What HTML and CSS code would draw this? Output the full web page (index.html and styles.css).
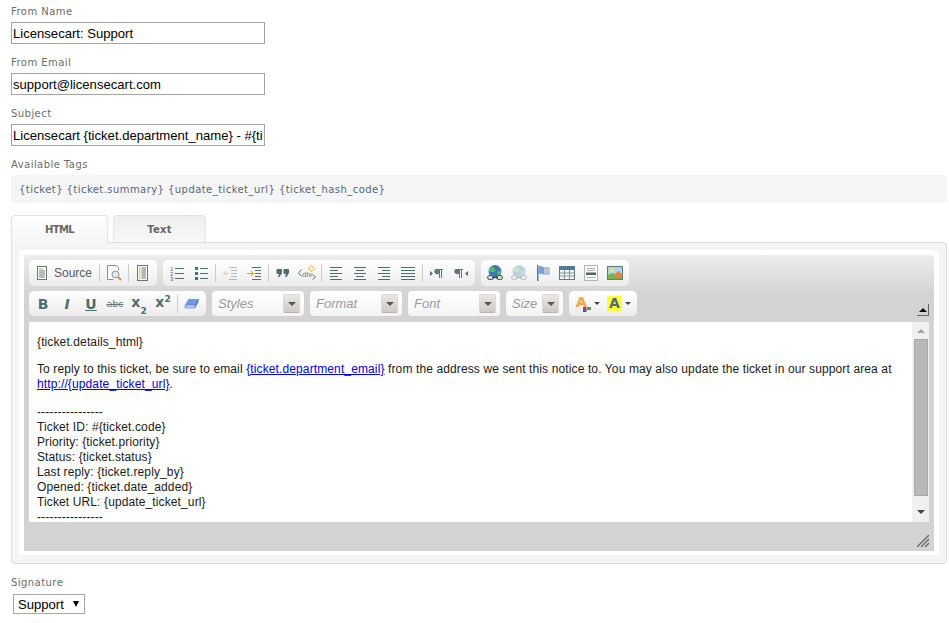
FILE: index.html
```html
<!DOCTYPE html>
<html lang="en">
<head>
<meta charset="utf-8">
<title>Ticket notice template</title>
<link rel="stylesheet" href="styles.css">
</head>
<body>
<svg class="defs" aria-hidden="true">
  <symbol id="i-doc" viewBox="0 0 16 16"><rect x="3.500" y="1.500" width="9" height="13" fill="#fff" stroke="#5f7a78"/><path d="M5 4h4" stroke="#e8a040"/><path d="M5 6h6M5 8h6M5 10h6M5 12h6" stroke="#5f7a78"/></symbol>
  <symbol id="i-preview" viewBox="0 0 16 16"><path d="M1.500 .5h9l2 2v3M1.500 .5v14h6" fill="#fff" stroke="#7f9290"/><circle cx="9.500" cy="9.500" r="3.500" fill="#dfe8f0" stroke="#8a96a0"/><path d="M12 12l3 3" stroke="#d89030" stroke-width="2"/></symbol>
  <symbol id="i-tpl" viewBox="0 0 16 16"><rect x="2.500" y=".5" width="10" height="15" fill="#fbfbf6" stroke="#5f7a78"/><path d="M4 3h1.500M4 5h1.500M4 7h1.500M4 9h1.500M4 11h1.500M4 13h1.500" stroke="#e8962c"/><path d="M6.500 3h4.500M6.500 5h4.500M6.500 7h4.500M6.500 9h4.500M6.500 11h4.500M6.500 13h4.500" stroke="#5f7a78"/></symbol>
  <symbol id="i-ul" viewBox="0 0 16 16"><path d="M2 2h3v3H2zM2 7h3v3H2zM2 12h3v3H2z" fill="#4f6d6b"/><path d="M7 3.500h8M7 8.500h8M7 13.500h8" stroke="#4f6d6b"/></symbol>
  <symbol id="i-out" viewBox="0 0 16 16"><g opacity=".4"><path d="M7 2.500h8M9 5.500h6M9 8.500h6M9 11.500h6M7 14.500h8" stroke="#4f6d6b"/><path d="M7 8.500H2M4.500 6l-2.500 2.500 2.500 2.500" fill="none" stroke="#e8962c"/></g></symbol>
  <symbol id="i-ind" viewBox="0 0 16 16"><path d="M6 2.500h9M9 5.500h6M9 8.500h6M9 11.500h6M6 14.500h9" stroke="#4f6d6b"/><path d="M1 8.500h6M5 6l2.500 2.500L5 11" fill="none" stroke="#e8962c"/></symbol>
  <symbol id="i-quote" viewBox="0 0 16 16"><path d="M2.500 4h3.500a1 1 0 0 1 1 1v3l-2.500 4H3l1-3H2.500a1 1 0 0 1-1-1V5a1 1 0 0 1 1-1zM9.500 4H13a1 1 0 0 1 1 1v3l-2.500 4H10l1-3H9.500a1 1 0 0 1-1-1V5a1 1 0 0 1 1-1z" fill="#4f6d6b"/></symbol>
  <symbol id="i-left" viewBox="0 0 16 16"><path d="M2 2.500h12M2 5.500h8M2 8.500h12M2 11.500h8M2 14.500h12" stroke="#4f6d6b"/></symbol>
  <symbol id="i-center" viewBox="0 0 16 16"><path d="M2 2.500h12M4 5.500h8M2 8.500h12M4 11.500h8M2 14.500h12" stroke="#4f6d6b"/></symbol>
  <symbol id="i-right" viewBox="0 0 16 16"><path d="M2 2.500h12M6 5.500h8M2 8.500h12M6 11.500h8M2 14.500h12" stroke="#4f6d6b"/></symbol>
  <symbol id="i-just" viewBox="0 0 16 16"><path d="M1 2.500h14M1 5.500h14M1 8.500h14M1 11.500h14M1 14.500h14" stroke="#4f6d6b"/></symbol>
  <symbol id="i-ltr" viewBox="0 0 16 16"><path d="M1 6l3 2.500L1 11z" fill="#4d6a9c"/><path d="M7 4h7v1h-1v8h-1V5h-1v8h-1V9H9a2.500 2.500 0 0 1-2-5z" fill="#5f7a78"/></symbol>
  <symbol id="i-rtl" viewBox="0 0 16 16"><path d="M15 6l-3 2.500 3 2.500z" fill="#4d6a9c"/><path d="M3 4h7v1H9v8H8V5H7v8H6V9H5a2.500 2.500 0 0 1-2-5z" fill="#5f7a78"/></symbol>
  <symbol id="i-link" viewBox="0 0 16 16"><circle cx="8" cy="6.500" r="6.500" fill="#3f78b8"/><path d="M5 1.500c3 1 4 3 3 5-2 1-4 .5-6 0 0-2 1-4 3-5zM10 7l3-2 1 3-3 3z" fill="#52c060"/><rect x=".5" y="10.500" width="6" height="4" rx="2" fill="#cfe0d8" stroke="#36504e"/><rect x="9.500" y="10.500" width="6" height="4" rx="2" fill="#cfe0d8" stroke="#36504e"/><path d="M5 12.500h6" stroke="#36504e" stroke-width="1.500"/></symbol>
  <symbol id="i-flag" viewBox="0 0 16 16"><path d="M2 0h1.500v16H2z" fill="#4f74c8"/><path d="M3.500 1.500c3-1.500 4 1 6.500 1h4.500v7H10c-2.500 0-3.500-1.500-6.500-.5z" fill="#7f9ce0"/><path d="M9 3.500h5v5H9z" fill="#c4c8c4"/></symbol>
  <symbol id="i-table" viewBox="0 0 16 16"><rect x=".5" y="1.500" width="15" height="13" fill="#f4f6f6" stroke="#5f7a88"/><rect x="1" y="2" width="14" height="3" fill="#4f7aa8"/><path d="M5.500 5v9M10.500 5v9M1 8h14M1 11h14" stroke="#7f959c"/></symbol>
  <symbol id="i-hr" viewBox="0 0 16 16"><rect x="1.500" y=".5" width="13" height="15" fill="#fafafa" stroke="#b4b4b4"/><path d="M4 3.500h8M4 5.500h8M4 12.500h8" stroke="#b0b0b0"/><rect x="3" y="7.500" width="10" height="2.500" fill="#55635f"/></symbol>
  <symbol id="i-img" viewBox="0 0 16 16"><rect x=".5" y="1.500" width="15" height="13" fill="#a8d4ee" stroke="#5f7a78"/><path d="M1 14V10l4-2 5 2 5 0v4z" fill="#7cb050"/><circle cx="4.500" cy="5" r="2" fill="#f2e070"/><path d="M8 9l3.500-3L15 9v3H8z" fill="#e88040"/></symbol>
  <symbol id="i-eraser" viewBox="0 0 16 16"><path d="M4.500 3h10l-3.500 6H1z" fill="#6f9ae8"/><path d="M1 9h10v3H1z" fill="#b8cdf0"/><path d="M11 9l3.500-6v3L11 12z" fill="#4f78c8"/><path d="M1 9h10v3H1zM11 9l3.500-6" fill="none" stroke="#5a78b8" stroke-width=".6"/></symbol>
  <symbol id="i-fore" viewBox="0 0 16 16"><path d="M4.500 1h3.500l4 10H9l-.7-2H4.200l-.7 2H.5z" fill="#f0a850"/><path d="M5.300 6.500h2L6.300 3.700z" fill="#fff"/><path d="M8 11h3.500v3H8z" fill="#e03030"/><path d="M12 11h4v3h-4z" fill="#50a050"/><path d="M8 14h3.500v2H8z" fill="#3060d0"/></symbol>
  <symbol id="i-grip" viewBox="0 0 12 12"><path d="M12 0L0 12M12 4L4 12M12 8l-4 4" stroke="#666" stroke-width="1.300"/></symbol>
</svg>

<main class="form">
  <div class="field">
    <label class="lbl" for="from-name">From Name</label>
    <input class="inp" id="from-name" value="Licensecart: Support">
  </div>
  <div class="field">
    <label class="lbl" for="from-email">From Email</label>
    <input class="inp" id="from-email" value="support@licensecart.com">
  </div>
  <div class="field">
    <label class="lbl" for="subject">Subject</label>
    <input class="inp" id="subject" value="Licensecart {ticket.department_name} - #{ticket.code} - {ticket.summary}">
  </div>
  <div class="lbl">Available Tags</div>
  <div class="tags">{ticket} {ticket.summary} {update_ticket_url} {ticket_hash_code}</div>

  <div class="tabs">
    <a class="tab tab-on">HTML</a>
    <a class="tab tab-off">Text</a>
  </div>
  <section class="panel">
    <div class="editor">
      <div class="bar">
        <div class="grp">
          <span class="btn btn-src"><svg class="ic"><use href="#i-doc"/></svg><span class="src">Source</span></span><i class="sep"></i>
          <span class="btn"><svg class="ic"><use href="#i-preview"/></svg></span><i class="sep"></i>
          <span class="btn"><svg class="ic"><use href="#i-tpl"/></svg></span>
        </div>
        <div class="grp">
          <span class="btn"><svg class="ic" viewBox="0 0 16 16"><text x="1" y="5.500" class="t5">1</text><text x="1" y="10.500" class="t5">2</text><text x="1" y="15.500" class="t5">3</text><path d="M6 3.500h9M6 8.500h9M6 13.500h9" stroke="#4f6d6b"/></svg></span>
          <span class="btn"><svg class="ic"><use href="#i-ul"/></svg></span><i class="sep"></i>
          <span class="btn"><svg class="ic"><use href="#i-out"/></svg></span>
          <span class="btn"><svg class="ic"><use href="#i-ind"/></svg></span><i class="sep"></i>
          <span class="btn"><svg class="ic"><use href="#i-quote"/></svg></span>
          <span class="btn"><svg class="ic ic-w" viewBox="0 0 18 16"><path d="M3.500 4.500L.5 8l3 3.500M14.500 9.500l3 2.500-3 2.500" fill="none" stroke="#5f7a78"/><path d="M13.500 .5l3 3-3 3-3-3z" fill="#fff" stroke="#eab060"/><text x="4" y="12" class="t7">div</text></svg></span><i class="sep"></i>
          <span class="btn"><svg class="ic"><use href="#i-left"/></svg></span>
          <span class="btn"><svg class="ic"><use href="#i-center"/></svg></span>
          <span class="btn"><svg class="ic"><use href="#i-right"/></svg></span>
          <span class="btn"><svg class="ic"><use href="#i-just"/></svg></span><i class="sep"></i>
          <span class="btn"><svg class="ic"><use href="#i-ltr"/></svg></span>
          <span class="btn"><svg class="ic"><use href="#i-rtl"/></svg></span>
        </div>
        <div class="grp">
          <span class="btn"><svg class="ic"><use href="#i-link"/></svg></span>
          <span class="btn btn-dim"><svg class="ic"><use href="#i-link"/></svg></span>
          <span class="btn"><svg class="ic"><use href="#i-flag"/></svg></span>
          <span class="btn"><svg class="ic"><use href="#i-table"/></svg></span>
          <span class="btn"><svg class="ic"><use href="#i-hr"/></svg></span>
          <span class="btn"><svg class="ic"><use href="#i-img"/></svg></span>
        </div>
      </div>
      <div class="bar bar2">
        <div class="grp">
          <span class="btn fmt fmt-b">B</span>
          <span class="btn fmt fmt-i">I</span>
          <span class="btn fmt fmt-u">U</span>
          <span class="btn fmt-s">abc</span>
          <span class="btn fmt fmt-x">x<sub>2</sub></span>
          <span class="btn fmt fmt-x">x<sup>2</sup></span><i class="sep"></i>
          <span class="btn"><svg class="ic"><use href="#i-eraser"/></svg></span>
        </div>
        <div class="combo"><span>Styles</span><b class="drop"></b></div>
        <div class="combo"><span>Format</span><b class="drop"></b></div>
        <div class="combo"><span>Font</span><b class="drop"></b></div>
        <div class="combo combo-s"><span>Size</span><b class="drop"></b></div>
        <div class="grp grp-col">
          <span class="col"><svg class="ic"><use href="#i-fore"/></svg><i class="caret"></i></span>
          <span class="col"><span class="bgA">A</span><i class="caret"></i></span>
        </div>
        <i class="collapse"></i>
      </div>
      <div class="body">
        <div class="doc">
          <p>{ticket.details_html}</p>
          <p>To reply to this ticket, be sure to email <a href="#">{ticket.department_email}</a> from the address we sent this notice to. You may also update the ticket in our support area at <a href="#">http://{update_ticket_url}</a>.</p>
          <p class="doc-info">----------------<br>Ticket ID: #{ticket.code}<br>Priority: {ticket.priority}<br>Status: {ticket.status}<br>Last reply: {ticket.reply_by}<br>Opened: {ticket.date_added}<br>Ticket URL: {update_ticket_url}<br>----------------</p>
        </div>
        <div class="sb">
          <i class="sb-up"></i>
          <i class="sb-thumb"></i>
          <i class="sb-down"></i>
        </div>
      </div>
      <div class="foot"><svg class="grip"><use href="#i-grip"/></svg></div>
    </div>
  </section>
  <label class="lbl lbl-sig" for="sig">Signature</label>
  <div class="sel"><select id="sig"><option>Support</option></select></div>
</main>
</body>
</html>
```
FILE: styles.css
```css
* { box-sizing: border-box; }
html, body { margin: 0; padding: 0; background: #fff; }
body { height: 623px; overflow: hidden; }
.defs { position: absolute; width: 0; height: 0; }
.t5 { font: 6px "Liberation Sans", sans-serif; fill: #4f6d6b; }
.t7 { font: 8px "Liberation Sans", sans-serif; fill: #5f7a78; }
.form { padding: 5px 2px 0 11px; }
.lbl { display: block; font: 10px/13px "DejaVu Sans", sans-serif; letter-spacing: .45px; color: #6b6b6b; height: 13px; margin-bottom: 4px; }
.field { height: 51px; }
.inp { display: block; width: 254px; height: 22px; border: 1px solid #a3a3a3; padding: 0 1px; font: 13.1px "Liberation Sans", sans-serif; color: #000; background: #fff; border-radius: 0; outline: 0; }
.tags { height: 28px; padding-left: 8px; background: #f5f5f5; border-radius: 4px; font: 10px/29px "DejaVu Sans", sans-serif; letter-spacing: .44px; color: #55687c; }
.tabs { display: flex; gap: 5px; margin-top: 12px; height: 27px; position: relative; z-index: 1; }
.tab { display: block; height: 27px; text-align: center; font: bold 10px/28px "DejaVu Sans", sans-serif; letter-spacing: .3px; color: #666; border: 1px solid #e2e2e2; border-bottom: 0; border-radius: 4px 4px 0 0; }
.tab-on { width: 97px; height: 28px; background: linear-gradient(#fff, #f5f5f5); letter-spacing: -.6px; }
.tab-off { width: 93px; background: linear-gradient(#eee, #f8f8f8); }
.panel { height: 322px; padding: 7px 7px 8px 7px; background: #f5f5f5; border: 1px solid #ddd; border-radius: 0 4px 4px 4px; }
.editor { height: 100%; display: flex; flex-direction: column; background: #d3d3d3 linear-gradient(#ededed, #d3d3d3) no-repeat; background-size: 100% 40px; border: solid #fff; border-width: 5px 5px 4px 5px; border-radius: 3px; padding: 5px 5px 0; }
.bar { display: flex; gap: 6px; height: 26px; align-items: stretch; flex: none; }
.bar2 { margin-top: 5px; height: 25px; position: relative; }
.grp { display: flex; align-items: center; padding: 0 2px; border-radius: 5px; background: linear-gradient(#fff, #ececec); }
.btn { flex: none; width: 24px; height: 22px; display: flex; align-items: center; justify-content: center; }
.btn-src { width: 66px; justify-content: flex-start; padding-left: 3px; gap: 4px; }
.btn-dim { opacity: .3; }
.src { font: 12px "Liberation Sans", sans-serif; color: #55605f; }
.ic { width: 16px; height: 16px; flex: none; }
.ic-w { width: 18px; }
.sep { flex: none; width: 1px; height: 18px; margin: 0 2px; background: #c8cccc; }
.fmt { font: bold 14px "DejaVu Sans", sans-serif; color: #4f6d6b; }
.fmt-i { font-style: italic; }
.fmt-u { text-decoration: underline; }
.fmt-s { font: 9.5px "DejaVu Sans", sans-serif; color: #5f7a78; text-decoration: line-through; }
.fmt-x { font-size: 14px; align-items: baseline; padding-top: 1px; }
.fmt-x sub, .fmt-x sup { font-size: 9px; line-height: 0; }
.fmt-x sub { align-self: flex-end; margin-bottom: 4px; }
.fmt-x sup { align-self: flex-start; margin-top: 5px; }
.combo { flex: none; width: 92px; display: flex; align-items: center; justify-content: space-between; padding: 0 4px 0 6px; border-radius: 4px; background: linear-gradient(#fff, #f4f4f4); font: italic 13px "Liberation Sans", sans-serif; color: #999; }
.combo-s { width: 57px; padding: 0 4px 0 6px; }
.drop { flex: none; display: flex; align-items: center; justify-content: center; width: 17px; height: 19px; border-radius: 2px; background: linear-gradient(#ebe7e7, #cfc9c9); border: 1px solid #ded8d8; border-bottom-color: #b8b2b2; }
.drop::after { content: ""; border: solid transparent; border-width: 4px 4px 0; border-top-color: #555; }
.grp-col { width: 68px; padding: 0 6px; justify-content: space-between; }
.col { display: flex; align-items: center; gap: 3px; }
.caret { border: solid transparent; border-width: 3px 3px 0; border-top-color: #444; }
.bgA { width: 15px; height: 15px; background: #ffff40; font: bold 14px/15px "DejaVu Sans", sans-serif; color: #556a70; text-align: center; }
.collapse { position: absolute; right: 0; top: 13px; width: 12px; height: 12px; border: solid #666; border-width: 0 1px 1px 0; }
.collapse::after { content: ""; position: absolute; left: 2px; top: 4px; border: solid transparent; border-width: 0 4px 4px; border-bottom-color: #000; }
.body { display: flex; flex: none; height: 200px; margin-top: 6px; background: #fff; overflow: hidden; }
.doc { flex: 1; min-width: 0; padding: 1px 8px 0; font: 12px/15px "Liberation Sans", sans-serif; letter-spacing: .12px; color: #1a1a1a; }
.doc p { margin: 12px 0; }
.doc .doc-info { margin-top: 13px; }
.doc a { color: #00e; }
.sb { flex: none; width: 17px; background: #f0f0f0; display: flex; flex-direction: column; align-items: center; }
.sb-up { margin-top: 7px; border: solid transparent; border-width: 0 4px 4px; border-bottom-color: #a3a3a3; }
.sb-thumb { width: 14px; height: 157px; margin-top: 6px; background: #b8b8b8; border: 1px solid #a8a8a8; }
.sb-down { margin-top: 14px; border: solid transparent; border-width: 4px 4px 0; border-top-color: #444; }
.foot { flex: 1; display: flex; justify-content: flex-end; align-items: flex-end; padding-bottom: 4px; }
.grip { width: 12px; height: 12px; }
.lbl-sig { margin-top: 12px; }
.sel { position: relative; width: 72px; height: 20px; margin: 5px 0 0 2px; }
.sel select { appearance: none; width: 100%; height: 100%; border: 1px solid #a6a6a6; border-radius: 0; padding: 1px 0 0 4px; background: #fff; font: 13.1px "Liberation Sans", sans-serif; color: #000; }
.sel::after { content: ""; position: absolute; right: 6px; top: 7px; border: solid transparent; border-width: 6px 3.5px 0; border-top-color: #000; }
```
